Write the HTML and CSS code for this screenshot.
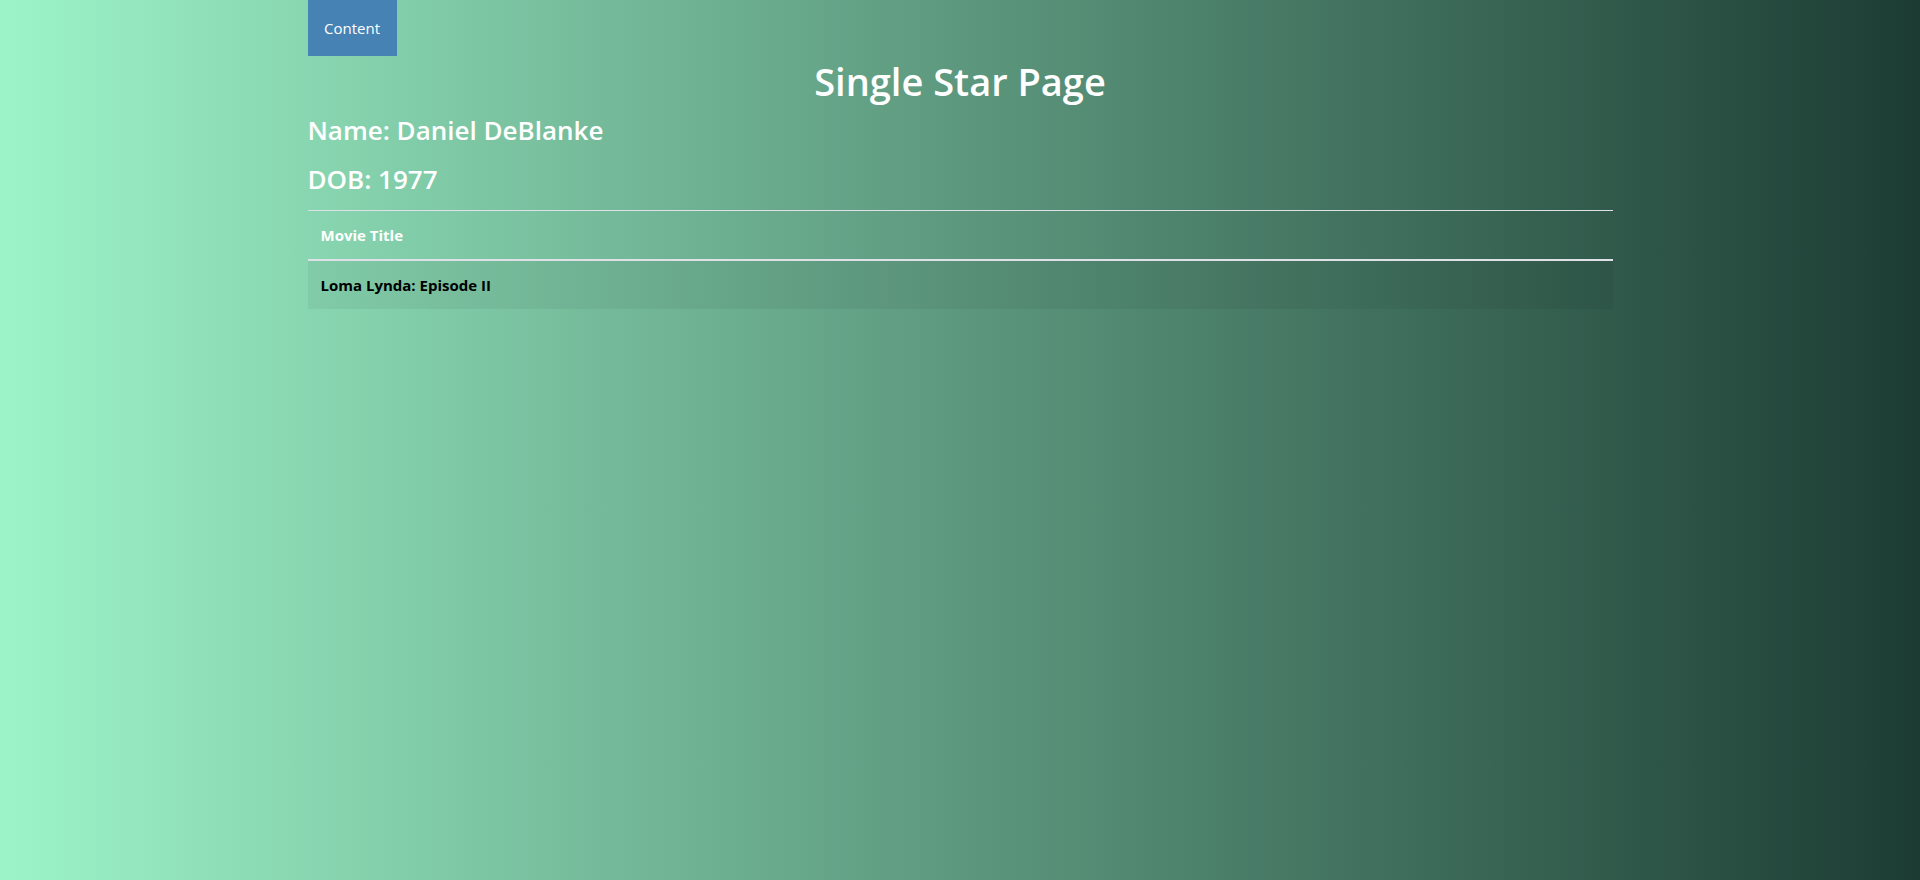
FILE: index.html
```html
<!DOCTYPE html>
<html>
<head>
<meta charset="utf-8">
<title>Single Star Page</title>
<link rel="stylesheet" href="styles.css">
</head>
<body>
<div class="container">
  <nav class="nav">
    <a class="nav-btn" href="#">Content</a>
  </nav>
  <h1 class="title">Single Star Page</h1>
  <h3 class="info">Name: Daniel DeBlanke</h3>
  <h3 class="info">DOB: 1977</h3>
  <table class="movies">
    <thead>
      <tr><th>Movie Title</th></tr>
    </thead>
    <tbody>
      <tr><td>Loma Lynda: Episode II</td></tr>
    </tbody>
  </table>
</div>
</body>
</html>
```
FILE: styles.css
```css
html, body {
  margin: 0;
  padding: 0;
}
body {
  min-height: 100vh;
  background: linear-gradient(to right, #9df4c9, #1c3c33);
  font-family: "Open Sans", "Noto Sans", sans-serif;
  color: #fff;
}
.container {
  width: 1305px;
  margin: 0 auto;
  display: flex;
  flex-direction: column;
}
.nav {
  display: flex;
}
.nav-btn {
  display: flex;
  align-items: center;
  justify-content: center;
  width: 89px;
  height: 56px;
  background: #4682b4;
  color: #fff;
  text-decoration: none;
  font-size: 15px;
}
.title {
  margin: 1px 0 8px;
  text-align: center;
  font-size: 38px;
  font-weight: 600;
  line-height: 48px;
}
.info {
  margin: 0 0 15px;
  font-size: 26px;
  font-weight: 600;
  line-height: 34px;
}
.movies {
  width: 100%;
  border-collapse: collapse;
  margin-top: -1px;
}
.movies th, .movies td {
  text-align: left;
  padding: 12px 13px;
  font-size: 15px;
  line-height: 24px;
  font-weight: 700;
}
.movies th {
  color: #fff;
  border-top: 1px solid #dee2e6;
  border-bottom: 2px solid #dee2e6;
}
.movies td {
  color: #000;
  background: rgba(0, 0, 0, 0.05);
}
```
